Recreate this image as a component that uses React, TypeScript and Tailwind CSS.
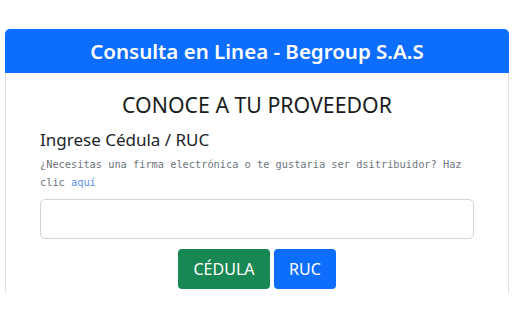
import React from "react";

const App: React.FC = () => {
  return (
    <div className="w-[512px] h-[320px] bg-white pl-[5px] pr-[3px] pt-[29px]" style={{ fontFamily: '"Noto Sans", "Open Sans", sans-serif' }}>
      <div className="h-[264px] overflow-hidden">
        <div className="rounded-t-[5px] border border-[#dcdfe3] pb-6">
          <div className="h-[44px] -mx-px -mt-px rounded-t-[5px] bg-[#0d6efd] flex items-center justify-center">
            <h1 className="text-white text-[20.5px] font-semibold leading-none">Consulta en Linea - Begroup S.A.S</h1>
          </div>
          <div className="px-[34px] pt-[20px]">
            <h2 className="text-center text-[21.3px] leading-[24px] text-[#1a1d20]">CONOCE A TU PROVEEDOR</h2>
            <p className="mt-[12px] text-[17px] leading-[22px] text-[#212529]">Ingrese Cédula / RUC</p>
            <p className="mt-[4px] text-[10.3px] leading-[18px] text-[#6c757d]" style={{ fontFamily: '"DejaVu Sans Mono", "Liberation Mono", monospace' }}>
              ¿Necesitas una firma electrónica o te gustaria ser dsitribuidor? Haz clic <a className="text-[#5b8def]">aquí</a>
            </p>
            <input type="text" className="mt-[8px] block w-full h-[40px] rounded-[5px] border border-[#ced4da] bg-white" />
            <div className="mt-[10px] flex justify-center gap-[4px]">
              <button className="h-[40px] w-[92px] rounded-[4px] bg-[#198754] text-white text-[16px]">CÉDULA</button>
              <button className="h-[40px] w-[62px] rounded-[4px] bg-[#0d6efd] text-white text-[16px]">RUC</button>
            </div>
          </div>
        </div>
      </div>
    </div>
  );
};

export default App;
